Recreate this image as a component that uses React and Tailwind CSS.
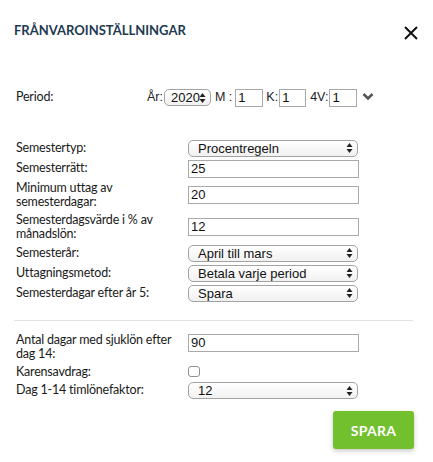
import React from 'react';

const Arrows = () => (
    <svg width="7" height="11" viewBox="0 0 7 11" className="absolute right-[5px] top-1/2 -translate-y-1/2 pointer-events-none">
        <path d="M3.5 0.5 L6.5 4.5 H0.5 Z" fill="#222" />
        <path d="M3.5 10.5 L6.5 6.5 H0.5 Z" fill="#222" />
    </svg>
);

const Select = ({ value, className = 'w-[170px]', pad = 'pl-[9px]' }) => (
    <div className={`relative ${className}`}>
        <div className={`h-[17px] rounded-[5px] border border-[#a3a3a3] bg-gradient-to-b from-white to-[#f1f1f1] ${pad} text-[13px] leading-[15px] tracking-normal text-[#111] font-['Liberation_Sans',Arial,sans-serif]`}>
            {value}
        </div>
        <Arrows />
    </div>
);

const Input = ({ value, className = 'w-[171px]' }) => (
    <div className={`h-[18px] border border-[#a9a9a9] bg-white pl-[2px] text-[13px] leading-[16px] tracking-normal text-[#111] font-['Liberation_Sans',Arial,sans-serif] ${className}`}>
        {value}
    </div>
);

const Row = ({ label, children, align = 'items-center' }) => (
    <div className={`flex ${align}`}>
        <div className="w-[172px] shrink-0 leading-[14.5px]">{label}</div>
        {children}
    </div>
);

export default function App() {
    return (
        <div className="w-[433px] h-[462px] bg-white font-['Lato','Open_Sans',sans-serif] text-[12.5px] tracking-[-0.2px] text-[#1a1a1a]">
            {/* Header */}
            <div className="flex items-start justify-between pl-[14px] pr-[15px] pt-[21px]">
                <h1 className="text-[13px] font-bold tracking-normal text-[#1e3a52]">FRÅNVAROINSTÄLLNINGAR</h1>
                <svg width="14" height="14" viewBox="0 0 14 14" className="mt-[5px]">
                    <path d="M1 1 L13 13 M13 1 L1 13" stroke="#111" strokeWidth="2" />
                </svg>
            </div>

            <div className="px-[16px]">
                {/* Period */}
                <div className="mt-[48px] flex items-center h-[18px]">
                    <div className="w-[131px] shrink-0">Period:</div>
                    <span className="font-['Liberation_Sans',Arial,sans-serif] tracking-normal text-[12.5px] text-[#222]">År:</span>
                    <Select value="2020" className="w-[47px] ml-px" pad="pl-[6px]" />
                    <span className="ml-[4px] font-['Liberation_Sans',Arial,sans-serif] tracking-normal text-[12.5px] text-[#222]">M :</span>
                    <Input value="1" className="w-[28px] ml-[3px]" />
                    <span className="ml-[3px] font-['Liberation_Sans',Arial,sans-serif] tracking-normal text-[12.5px] text-[#222]">K:</span>
                    <Input value="1" className="w-[27px] ml-px" />
                    <span className="ml-[4px] font-['Liberation_Sans',Arial,sans-serif] tracking-normal text-[12.5px] text-[#222]">4V:</span>
                    <Input value="1" className="w-[28px] ml-px" />
                    <svg width="12" height="9" viewBox="0 0 12 9" className="ml-[5px] -mt-[3px]">
                        <path d="M1.5 2 L6 6.5 L10.5 2" stroke="#555" strokeWidth="2.6" fill="none" />
                    </svg>
                </div>

                {/* Semester */}
                <div className="mt-[33px] flex flex-col gap-[3px]">
                    <Row label="Semestertyp:"><Select value="Procentregeln" /></Row>
                    <Row label="Semesterrätt:"><Input value="25" /></Row>
                    <Row label={<>Minimum uttag av<br />semesterdagar:</>}><Input value="20" /></Row>
                    <Row label={<>Semesterdagsvärde i % av<br />månadslön:</>}><Input value="12" /></Row>
                    <Row label="Semesterår:"><Select value="April till mars" /></Row>
                    <Row label="Uttagningsmetod:"><Select value="Betala varje period" /></Row>
                    <Row label="Semesterdagar efter år 5:"><Select value="Spara" /></Row>
                </div>
            </div>

            <div className="ml-[14px] mr-[20px] mt-[18px] border-t border-[#e2e2e2]" />

            <div className="px-[16px] mt-[12px] flex flex-col gap-[3px]">
                <Row align="items-start" label={<>Antal dagar med sjuklön efter<br />dag 14:</>}>
                    <Input value="90" className="w-[171px] mt-px" />
                </Row>
                <Row label="Karensavdrag:">
                    <div className="h-[11px] w-[12px] rounded-[3px] border border-[#8f8f8f] bg-white" />
                </Row>
                <Row label="Dag 1-14 timlönefaktor:"><Select value="12" /></Row>
            </div>

            <div className="flex justify-end pr-[19px] mt-[12px]">
                <button className="h-[38px] w-[81px] rounded-[3px] bg-[#73c02e] text-white text-[14px] font-bold tracking-[0.3px] shadow-[0_2px_5px_rgba(0,0,0,0.22)]">
                    SPARA
                </button>
            </div>
        </div>
    );
}
